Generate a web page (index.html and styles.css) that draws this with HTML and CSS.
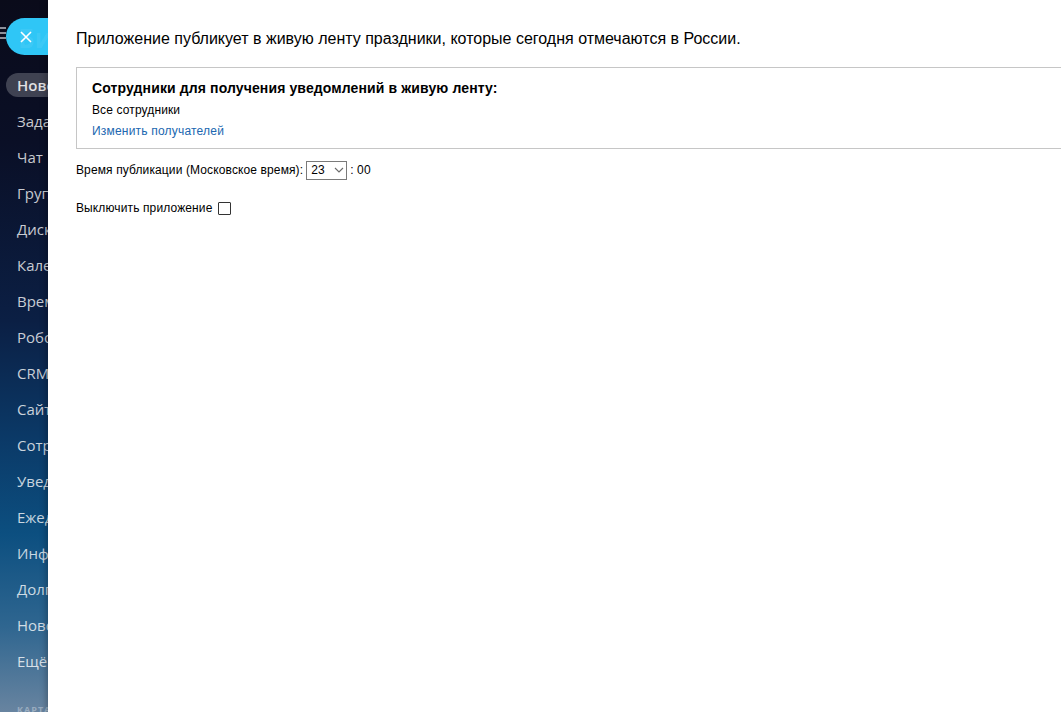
FILE: index.html
```html
<!DOCTYPE html>
<html lang="ru">
<head>
<meta charset="utf-8">
<title>Праздники</title>
<link rel="stylesheet" href="styles.css">
</head>
<body>
<div class="page">
  <aside class="sidebar">
    <div class="sidebar-inner">
      <div class="burger"><span></span><span></span><span></span></div>
      <nav class="menu">
        <div class="menu-item active">Новости</div>
        <div class="menu-item">Задачи и проекты</div>
        <div class="menu-item">Чат и звонки</div>
        <div class="menu-item">Группы</div>
        <div class="menu-item">Диск</div>
        <div class="menu-item">Календарь</div>
        <div class="menu-item">Время и отчёты</div>
        <div class="menu-item">Роботизация бизнеса</div>
        <div class="menu-item">CRM</div>
        <div class="menu-item">Сайты и магазины</div>
        <div class="menu-item">Сотрудники</div>
        <div class="menu-item">Уведомления</div>
        <div class="menu-item">Ежедневные отчёты</div>
        <div class="menu-item">Информация</div>
        <div class="menu-item">Долгожданные</div>
        <div class="menu-item">Новогодние</div>
        <div class="menu-item">Ещё</div>
      </nav>
      <div class="menu-foot">Карта сайта</div>
    </div>
  </aside>
  <main class="panel">
    <p class="intro">Приложение публикует в живую ленту праздники, которые сегодня отмечаются в России.</p>
    <section class="box">
      <div class="box-title">Сотрудники для получения уведомлений в живую ленту:</div>
      <div class="box-line">Все сотрудники</div>
      <div class="box-line"><a class="link" href="#">Изменить получателей</a></div>
    </section>
    <div class="row time-row">
      <span>Время публикации (Московское время):</span>
      <span class="select">23<svg class="chev" width="10" height="6" viewBox="0 0 10 6"><path d="M1 1l4 4 4-4" fill="none" stroke="#6b6b6b" stroke-width="1.1"/></svg></span>
      <span>: 00</span>
    </div>
    <div class="row off-row">
      <span>Выключить приложение</span>
      <input class="check" type="checkbox">
    </div>
  </main>
</div>
<div class="close-btn"><span class="logo-ghost">Би</span><svg class="close-x" width="12" height="12" viewBox="0 0 12 12"><path d="M1 1l10 10M11 1L1 11" stroke="#fff" stroke-width="1.6" fill="none"/></svg></div>
</body>
</html>
```

FILE: styles.css
```css
html, body {
  margin: 0;
  padding: 0;
  height: 100%;
}
body {
  font-family: "Liberation Sans", Arial, sans-serif;
  color: #000;
  background: #fff;
  overflow: hidden;
}
.page {
  display: flex;
  height: 712px;
}
.sidebar {
  width: 48px;
  flex: none;
  overflow: hidden;
  background: linear-gradient(180deg, #0a0b1a 0%, #0a0f26 20%, #0b1f44 45%, #0b3a68 62%, #0c4f80 75%, #2f6690 88%, #6884a0 100%);
}
.sidebar-inner {
  width: 240px;
  position: relative;
  height: 100%;
}
.burger {
  position: absolute;
  left: -6px;
  top: 27px;
  display: flex;
  flex-direction: column;
  gap: 3px;
}
.burger span {
  display: block;
  width: 12px;
  height: 2px;
  background: #8d909a;
}
.menu {
  padding-top: 73px;
  display: flex;
  flex-direction: column;
  gap: 12px;
  font-family: "Open Sans", "Noto Sans", sans-serif;
  font-size: 15px;
  word-spacing: 6px;
  color: rgba(255, 255, 255, 0.78);
}
.menu-item {
  height: 24px;
  line-height: 24px;
  padding-left: 17px;
  white-space: nowrap;
}
.menu-item.active {
  margin-left: 6px;
  padding-left: 11px;
  border-radius: 12px;
  background: rgba(255, 255, 255, 0.22);
  color: rgba(255, 255, 255, 0.85);
  font-weight: 600;
}
.menu-foot {
  margin-top: 30px;
  padding-left: 17px;
  font-family: "Open Sans", "Noto Sans", sans-serif;
  font-size: 9px;
  font-weight: 700;
  letter-spacing: 1px;
  text-transform: uppercase;
  color: rgba(255, 255, 255, 0.35);
}
.panel {
  flex: 1;
  min-width: 0;
  overflow: hidden;
  background: #fff;
  padding: 29px 0 0 28px;
  box-shadow: -2px 0 6px rgba(0, 0, 0, 0.25);
  position: relative;
  font-size: 12px;
  letter-spacing: 0.12px;
}
.intro {
  margin: 0 0 18px;
  font-size: 16px;
  line-height: 20px;
  letter-spacing: 0;
}
.box {
  border: 1px solid #c6c6c6;
  margin-right: -12px;
  padding: 8px 15px 6px;
}
.box-title {
  font-size: 14px;
  font-weight: 700;
  line-height: 24px;
}
.box-line {
  font-size: 12px;
  line-height: 21px;
}
.link {
  color: #2067b0;
  text-decoration: none;
  letter-spacing: 0.2px;
}
.row {
  display: flex;
  align-items: center;
  height: 20px;
  font-size: 12px;
}
.time-row {
  margin-top: 11px;
  gap: 3px;
}
.select {
  box-sizing: border-box;
  width: 41px;
  height: 19px;
  border: 1px solid #7a7a7a;
  display: flex;
  align-items: center;
  padding-left: 4px;
  gap: 9px;
  font-size: 12px;
}
.chev {
  display: block;
}
.off-row {
  margin-top: 18px;
  gap: 6px;
}
.check {
  appearance: none;
  -webkit-appearance: none;
  box-sizing: border-box;
  margin: 0;
  width: 13px;
  height: 13px;
  border: 1px solid #333;
  border-radius: 1px;
  background: #fff;
}
.close-btn {
  position: absolute;
  left: 6px;
  top: 18px;
  width: 42px;
  height: 37px;
  border-radius: 19px 0 0 19px;
  background: #2fc6f6;
  overflow: hidden;
}
.logo-ghost {
  position: absolute;
  left: 12px;
  top: 2px;
  font-family: "Open Sans", sans-serif;
  font-size: 26px;
  font-weight: 700;
  color: rgba(255, 255, 255, 0.08);
}
.close-x {
  position: absolute;
  left: 14px;
  top: 13px;
  display: block;
}
```
